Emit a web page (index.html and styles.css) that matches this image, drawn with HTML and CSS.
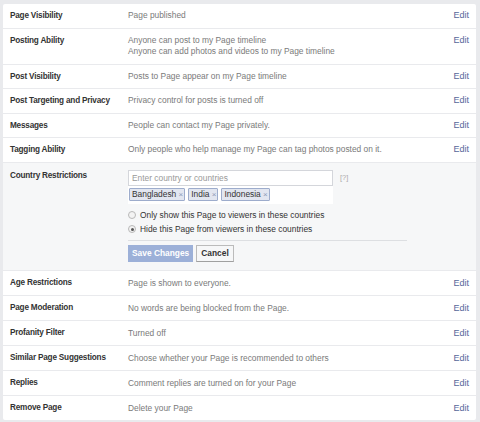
FILE: index.html
```html
<!DOCTYPE html>
<html>
<head>
<meta charset="utf-8">
<link rel="stylesheet" href="styles.css">
</head>
<body>
<div class="card">
  <div class="row"><div class="label">Page Visibility</div><div class="value">Page published</div><a class="edit">Edit</a></div>
  <div class="row"><div class="label">Posting Ability</div><div class="value">Anyone can post to my Page timeline<br>Anyone can add photos and videos to my Page timeline</div><a class="edit">Edit</a></div>
  <div class="row"><div class="label">Post Visibility</div><div class="value">Posts to Page appear on my Page timeline</div><a class="edit">Edit</a></div>
  <div class="row"><div class="label">Post Targeting and Privacy</div><div class="value">Privacy control for posts is turned off</div><a class="edit">Edit</a></div>
  <div class="row"><div class="label">Messages</div><div class="value">People can contact my Page privately.</div><a class="edit">Edit</a></div>
  <div class="row"><div class="label">Tagging Ability</div><div class="value">Only people who help manage my Page can tag photos posted on it.</div><a class="edit">Edit</a></div>
  <div class="row open">
    <div class="label">Country Restrictions</div>
    <div class="form">
      <div class="field-line">
        <div class="tokenbox">
          <div class="input">Enter country or countries</div>
          <div class="tokens">
            <span class="token">Bangladesh <span class="x">×</span></span>
            <span class="token">India <span class="x">×</span></span>
            <span class="token">Indonesia <span class="x">×</span></span>
          </div>
        </div>
        <span class="help">[?]</span>
      </div>
      <div class="radios">
        <label class="radio"><span class="dot"></span>Only show this Page to viewers in these countries</label>
        <label class="radio"><span class="dot checked"></span>Hide this Page from viewers in these countries</label>
      </div>
      <div class="buttons">
        <span class="btn save">Save Changes</span>
        <span class="btn cancel">Cancel</span>
      </div>
    </div>
  </div>
  <div class="row"><div class="label">Age Restrictions</div><div class="value">Page is shown to everyone.</div><a class="edit">Edit</a></div>
  <div class="row"><div class="label">Page Moderation</div><div class="value">No words are being blocked from the Page.</div><a class="edit">Edit</a></div>
  <div class="row"><div class="label">Profanity Filter</div><div class="value">Turned off</div><a class="edit">Edit</a></div>
  <div class="row"><div class="label">Similar Page Suggestions</div><div class="value">Choose whether your Page is recommended to others</div><a class="edit">Edit</a></div>
  <div class="row"><div class="label">Replies</div><div class="value">Comment replies are turned on for your Page</div><a class="edit">Edit</a></div>
  <div class="row last"><div class="label">Remove Page</div><div class="value">Delete your Page</div><a class="edit">Edit</a></div>
</div>
</body>
</html>
```
FILE: styles.css
```css
html, body {
  margin: 0;
  padding: 0;
  background: #e9eaed;
}
body {
  padding: 4px 4px 0 3px;
  font-family: "Liberation Sans", Arial, sans-serif;
  font-size: 8.4px;
  color: #4e5665;
}
.card {
  background: #fff;
  width: 473px;
  border-radius: 2px;
}
.row {
  display: flex;
  align-items: flex-start;
  padding: 6px 7px 6px 7px;
  line-height: 11.5px;
  border-bottom: 1px solid #e9eaed;
}
.open ~ .row {
  line-height: 12px;
}
.row.last {
  border-bottom: none;
}
.label {
  width: 118px;
  flex: none;
  font-weight: bold;
  font-size: 8.2px;
  letter-spacing: -0.2px;
  color: #333;
}
.value {
  flex: 1;
  color: #7a7a7a;
}
.edit {
  flex: none;
  color: #56679a;
  font-size: 9px;
}
.row.open {
  background: #f6f7f8;
  padding-top: 7px;
  padding-bottom: 8px;
  line-height: 11px;
}
.form {
  flex: 1;
  display: flex;
  flex-direction: column;
}
.field-line {
  display: flex;
  align-items: flex-start;
}
.tokenbox {
  width: 205px;
  background: #fff;
}
.input {
  box-sizing: border-box;
  height: 16px;
  line-height: 14px;
  border: 1px solid #d4d6db;
  padding: 0 3px;
  color: #999;
}
.tokens {
  display: flex;
  gap: 3px;
  padding: 2px 1px 3px;
}
.token {
  box-sizing: border-box;
  height: 13px;
  background: #e2e6f0;
  border: 1px solid #9daccc;
  color: #333;
  padding: 0 1px 0 2px;
  line-height: 11px;
  border-radius: 1px;
}
.token .x {
  color: #8e9ab8;
  font-size: 8px;
}
.help {
  margin-left: 7px;
  margin-top: 2px;
  color: #aaa;
  font-size: 7.5px;
}
.radios {
  margin-top: 6px;
  display: flex;
  flex-direction: column;
  gap: 3px;
  padding-bottom: 5px;
  border-bottom: 1px solid #dddfe2;
  width: 279px;
}
.radio {
  display: flex;
  align-items: center;
  color: #333;
  line-height: 11px;
}
.dot {
  width: 6px;
  height: 6px;
  border: 1px solid #b8b8b8;
  border-radius: 50%;
  background: #f3f3f3;
  margin: 0 4px 0 0;
  position: relative;
}
.dot.checked::after {
  content: "";
  position: absolute;
  left: 1.5px;
  top: 1.5px;
  width: 3px;
  height: 3px;
  border-radius: 50%;
  background: #555;
}
.buttons {
  display: flex;
  gap: 3px;
  margin-top: 4px;
}
.btn {
  box-sizing: border-box;
  height: 17px;
  font-weight: bold;
  font-size: 8.4px;
  line-height: 15px;
  border: 1px solid;
}
.save {
  padding: 0 3px;
  background: #9cb0d8;
  border-color: #9cb0d8;
  color: #fff;
}
.cancel {
  padding: 0 4px;
  background: #f6f7f8;
  border-color: #bbb #bbb #a0a0a0;
  color: #333;
}
```
